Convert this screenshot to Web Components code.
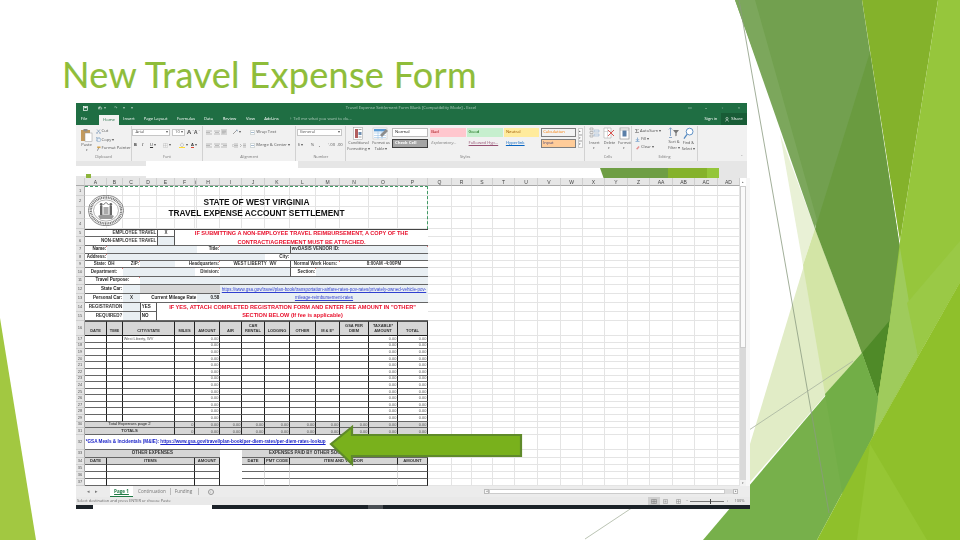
<!DOCTYPE html>
<html lang="en"><head><meta charset="utf-8"><title>New Travel Expense Form</title>
<style>html,body{margin:0;padding:0;background:#fff}</style></head>
<body>
<x-slide>
  <x-title>New Travel Expense Form</x-title>
  <xl-window>
    <xl-titlebar></xl-titlebar>
    <xl-ribbon></xl-ribbon>
    <xl-formula></xl-formula>
    <xl-sheet></xl-sheet>
    <xl-tabs></xl-tabs>
    <xl-status></xl-status>
  </xl-window>
  <x-arrow></x-arrow>
</x-slide>
<script>
function el(name, css, html){
  customElements.define(name, class extends HTMLElement{
    constructor(){super();const s=this.attachShadow({mode:'open'});
      s.innerHTML='<style>'+css+'</style>'+(typeof html==='function'?html():html);}
  });
}
/* place items along a line by their start and end: [html,x0,x1,extraClass] */
function strip(start,items){
  let p=start;
  return items.map(i=>{const m=i[1]-p;p=i[2];
    return `<span class="i ${i[3]||''}" style="margin-left:${m}px;width:${i[2]-i[1]}px">${i[0]}</span>`}).join('');
}
const ico=(w,h,b)=>`<svg width="${w}" height="${h}" viewBox="0 0 ${w} ${h}" style="display:block;flex:none">${b}</svg>`;

el('x-slide',`:host{display:block;position:relative;width:960px;height:540px;overflow:hidden;background:#fff}
.bg{position:absolute;left:0;top:0}
.fl{position:relative;display:flex;flex-direction:column;height:100%;box-sizing:border-box}`,
`<svg class="bg" width="960" height="540" viewBox="0 0 960 540">
<polygon points="0,318 36,540 0,540" fill="#a2c841"/>
<polygon points="780,134 815,229 803,265" fill="#e9f1d6"/>
<polygon points="815,229 862,353 750,482 750,444" fill="#e1ecc6"/>
<polygon points="815,229 862,353 825,394 803,265" fill="#d3e5a6"/>
<polygon points="735,0 862,0 900,248 890,320 878,398 862,353" fill="#72a04f"/>
<polygon points="735,0 755,0 817,220 815,229" fill="#7ca75c"/>
<polygon points="870,52 900,248 890,320 862,353 815,229" fill="#6a9b40"/>
<polygon points="862,353 890,320 878,398" fill="#4f8a28"/>
<polygon points="862,0 938,0 900,241" fill="#84b22b"/>
<polygon points="938,0 960,0 960,282 873,436 878,398 890,320 900,241" fill="#96c63c"/>
<polygon points="900,248 918,356 873,436 878,398 890,320" fill="#9fcb5c"/>
<polygon points="907,303 960,241 960,282 918,356" fill="#9ac946"/>
<polygon points="703,540 862,353 878,398 873,436 817,540" fill="#77b04b"/>
<polygon points="825,394 862,353 878,398 873,436 843,497" fill="#72ae47"/>
<polygon points="817,540 873,436 960,282 960,540" fill="#8fc02b"/>
<polygon points="870,444 927,540 857,540" fill="#96c634"/>
<line x1="739" y1="0" x2="829" y2="513" stroke="#8a9a80" stroke-width=".8"/>
<line x1="585" y1="539" x2="853" y2="361" stroke="#a8b4a0" stroke-width=".8"/>
</svg><div class="fl"><slot></slot></div>`);

el('x-title',`:host{display:block;box-sizing:border-box;height:103px;padding:52px 0 0 62px;
font:36px/44px Lato,"Open Sans",sans-serif;letter-spacing:.32px;-webkit-text-stroke:.15px #8fbd3a;color:#8fbd3a;white-space:nowrap}`,`<slot></slot>`);

el('xl-window',`:host{display:flex;flex-direction:column;width:674px;margin-left:76px;height:406px;background:#fff;filter:blur(.28px)}`,`<slot></slot>`);

el('xl-titlebar',`:host{display:block;width:671px;background:#1f6e43;color:#fff;font:4.2px/1 "Open Sans",sans-serif}
.a{display:flex;align-items:center;height:10px;position:relative}
.b{display:flex;align-items:center;height:12px}
.i{display:flex;align-items:center;justify-content:center;white-space:nowrap;flex:none;height:100%}
.dim{opacity:.6}.home{background:#f1f1f1;color:#1f6e43;height:10px;margin-top:2px}
.sh{background:#185c36;justify-content:center;gap:2px}.s{justify-content:flex-start}`,
()=>`<div class="a">${strip(76,[
 [ico(5,5,'<rect x=".5" y=".5" width="4" height="4" fill="none" stroke="#fff" stroke-width=".7"/><rect x="1.3" y="1" width="2.4" height="1.2" fill="#fff"/>'),82,88],
 [ico(5,4,'<path d="M1 3.5A1.5 1.5 0 1 1 3 3.6M1 .8V2.2H2.4" fill="none" stroke="#fff" stroke-width=".6"/>'),97,103],
 ['▾',103,106,'dim'],['↷',113,118,'dim'],['▾',122,126,'dim'],['▾',130,134,'dim'],
 ['Travel Expense Settlement Form Blank [Compatibility Mode] - Excel',347,475,'dim'],
 ['▭',687,693,'dim'],['–',703,709,'dim'],['▫',720,725,'dim'],['×',736,742,'dim']])}</div>
<div class="b">${strip(76,[['File',79,89],['Home',99,119,'home'],['Insert',124,134],['Page Layout',144,167],['Formulas',177,195],['Data',204,213],['Review',223,236],['View',246,255],['Add-ins',264,279],
 ['<span>♀ Tell me what you want to do...</span>',289,352,'dim s'],['Sign in',704,718],
 [ico(4,5,'<circle cx="2" cy="1.5" r="1.1" fill="none" stroke="#fff" stroke-width=".5"/><path d="M.4 4.6C.6 2.6 3.4 2.6 3.6 4.6" fill="none" stroke="#fff" stroke-width=".5"/>')+'Share',721,747,'sh']])}</div>`);

customElements.define('xl-group',class extends HTMLElement{
  constructor(){super();this.attachShadow({mode:'open'}).innerHTML=`<style>:host{display:flex;flex-direction:column;flex:none;box-sizing:border-box;height:35px;border-right:.7px solid #d2d2d2}
.m{flex:1;min-height:0;display:flex}
.l{height:7px;text-align:center;font:3.8px/6px "Open Sans",sans-serif;color:#777}</style><div class="m"><slot></slot></div><div class="l"><slot name="label"></slot></div>`;}
});

const G={
 paste:ico(13,14,'<rect x="1" y="2" width="9" height="11" fill="#c39a5d"/><rect x="3.5" y="1" width="4" height="2.4" fill="#8d8d8d"/><rect x="5" y="5" width="7" height="8.5" fill="#fff" stroke="#999" stroke-width=".5"/>'),
 cut:ico(5,5,'<path d="M1 .5 3.6 3.5M4 .5 1.4 3.5" stroke="#6d8db0" stroke-width=".6"/><circle cx="1" cy="4" r=".7" fill="none" stroke="#6d8db0" stroke-width=".4"/><circle cx="4" cy="4" r=".7" fill="none" stroke="#6d8db0" stroke-width=".4"/>'),
 copy:ico(5,5,'<rect x=".5" y=".5" width="3" height="3.4" fill="#fff" stroke="#8aa7c4" stroke-width=".5"/><rect x="1.6" y="1.3" width="3" height="3.4" fill="#e8eef5" stroke="#8aa7c4" stroke-width=".5"/>'),
 brush:ico(5,5,'<rect x="1.2" y=".5" width="3.3" height="1.6" fill="#d3a24c"/><path d="M2.6 2.1 1.4 4.7" stroke="#777" stroke-width=".8"/>'),
 lines:(a)=>ico(6,5,`<path d="${a}" stroke="#8b8b8b" stroke-width=".55" fill="none"/>`),
 table:ico(17,13,'<rect x="1" y="1" width="14" height="11" fill="#fff" stroke="#bbb" stroke-width=".5"/><rect x="2" y="2" width="12" height="2.4" fill="#5c9bd5"/><path d="M2 6h12M2 8.500h12M2 10.500h12M6 4v8M10 4v8" stroke="#9cc3e6" stroke-width=".6"/><path d="M8 8l6-6 2 2-6 6z" fill="#8c8c8c"/>'),
 cond:ico(13,13,'<rect x="1.500" y=".5" width="9" height="12" fill="#fff" stroke="#999" stroke-width=".5"/><rect x="3" y="2" width="3" height="9" fill="#b25d5d"/><rect x="6.500" y="5" width="3" height="3" fill="#6d8db0"/><path d="M6.500 2.500h3M6.500 10h3" stroke="#888" stroke-width=".8"/>'),
 ins:ico(11,13,'<path d="M1 1h3v2H1zM1 4.5h3v2H1zM1 8h3v2H1z" fill="none" stroke="#888" stroke-width=".5"/><path d="M5 3h5v2H5zM5 7h5v2H5z" fill="#e9eef4" stroke="#8aa7c4" stroke-width=".5"/>'),
 del:ico(12,13,'<path d="M1 1h7v10H1z" fill="#fff" stroke="#999" stroke-width=".5"/><path d="M1 4.5h7M4.5 1v10" stroke="#bbb" stroke-width=".5"/><path d="M5 3l6 6M11 3 5 9" stroke="#d9534f" stroke-width="1"/>'),
 fmt:ico(11,13,'<rect x="1" y="1" width="9" height="11" fill="#fff" stroke="#888" stroke-width=".6"/><rect x="3.5" y="3.5" width="4" height="6" fill="#5a7fa8"/><path d="M1 3h9" stroke="#888" stroke-width=".5"/>'),
 sigma:'<b style="font:7px/1 \'Liberation Serif\',serif;color:#555">Σ</b>',
 sort:ico(11,12,'<path d="M2.5 1v8" stroke="#5f87b7" stroke-width=".7"/><path d="M5 3h6L8.6 6V8.7L7.4 9.3V6z" fill="#777"/><path d="M.8 2.5l1.7-1.8 1.7 1.8" fill="none" stroke="#5f87b7" stroke-width=".6"/><path d="M1 10.5h3" stroke="#5f87b7" stroke-width=".7"/>'),
 mag:ico(11,13,'<circle cx="6.6" cy="4.6" r="3.4" fill="#fff" stroke="#4f86bf" stroke-width=".9"/><path d="M4 7.3 1 11.6" stroke="#4f86bf" stroke-width="1.2"/>'),
};
function grp(label,w,body){return `<xl-group style="width:${w}px">${body}<span slot="label">${label}</span></xl-group>`}

el('xl-ribbon',`:host{display:flex;width:671px;height:36px;background:#f1f1f1;font:4.2px/1 "Open Sans",sans-serif;color:#555;box-sizing:border-box;padding-top:1px;overflow:hidden}
.col{display:flex;flex-direction:column}
.line{display:flex;align-items:center;height:8px;flex:none;white-space:nowrap}
.i{display:flex;align-items:center;white-space:nowrap;flex:none;height:100%;gap:1px}
.box{background:#fff;border:.6px solid #c6c6c6;box-sizing:border-box;padding-left:2px;height:7px;justify-content:space-between;padding-right:1px}
.stack{display:flex;flex-direction:column;align-items:center;text-align:center;line-height:5.6px;flex:none;white-space:nowrap}
.tight{font-size:3.8px}
.ga{display:grid;grid-template-columns:36px 36px 36px 35px 35px;grid-auto-rows:9px;column-gap:1.3px;row-gap:1.500px;margin:2px 0 0 1px;flex:none}
.s{display:flex;align-items:center;padding-left:1.5px;font-size:4.2px;box-sizing:border-box;white-space:nowrap;overflow:hidden}
.u{text-decoration:underline}
.sc{display:flex;flex-direction:column;margin:2px 0 0 2px}
.sc i{display:block;width:5px;height:6.5px;background:#fafafa;border:.5px solid #ccc;box-sizing:border-box;font:3px/5px "Liberation Sans";text-align:center;font-style:normal}
.cl{flex:none;align-self:flex-end;margin:0 0 2px 43px;font-size:4px}`,
()=>`${grp('Clipboard',55.7,`<div class="stack" style="width:17px;margin:2px 0 0 2px">${G.paste}<span>Paste</span><span style="font-size:3px">▾</span></div>
 <div class="col" style="margin:1px 0 0 .5px;gap:.8px">
 <div class="line">${G.cut}&nbsp;Cut</div><div class="line">${G.copy}&nbsp;Copy ▾</div><div class="line">${G.brush}&nbsp;Format Painter</div></div>`)}
${grp('Font',71.5,`<div class="col" style="padding-top:2px;gap:5px">
 <div class="line">${strip(131.7,[['Arial <span>▾</span>',132.5,170,'box'],['10 <span>▾</span>',172,185,'box'],['<b style="font-size:6px">A</b>ˆ',187,193],['<b style="font-size:5px">A</b>ˇ',194,200]])}</div>
 <div class="line">${strip(131.7,[['<b style="color:#333">B</b>',134,138],['<i style="font-family:Liberation Serif;color:#333">I</i>',142,146],['<u style="color:#333">U</u> ▾',150,158],[ico(5,5,'<path d="M.5.5h4v4h-4zM2.5.5v4M.5 2.5h4" fill="none" stroke="#999" stroke-width=".4" stroke-dasharray=".6 .4"/>')+' ▾',163,172],[ico(6,6,'<path d="M1 3 3 .8 5 3 3 5z" fill="#eee" stroke="#999" stroke-width=".4"/><rect y="5" width="6" height="1" fill="#ffd92f"/>')+' ▾',179,188],['<span style="display:block;text-align:center;border-bottom:1.1px solid #d43;color:#333;line-height:5px;font-weight:700">A</span> ▾',191,199]])}</div></div>`)}
${grp('Alignment',93,`<div class="col" style="padding-top:2px;gap:5px">
 <div class="line">${strip(202.9,[[G.lines('M0 1h6M0 2.5h4M0 4h6'),206,212],[G.lines('M0 1h6M1 2.5h4M0 4h6'),214,220],['<span style="background:#d4d4d4;display:flex;padding:1px">'+G.lines('M0 1h6M0 2.5h6M0 4h4').replace('width="6" height="5"','width="4" height="4"')+'</span>',221,228],[ico(6,6,'<path d="M1 5 5 1" stroke="#8a8a8a" stroke-width=".8"/><path d="M4 1h1.6v1.6" stroke="#7a9cc0" fill="none" stroke-width=".5"/>')+'▾',232,240],[ico(5,5,'<path d="M.5.5h4v4h-4z" fill="#fff" stroke="#9aa" stroke-width=".4"/><path d="M1 2.5h3" stroke="#6d8db0" stroke-width=".6"/>')+' Wrap Text',250,276]])}</div>
 <div class="line">${strip(202.9,[[G.lines('M0 1h6M0 2.5h4M0 4h6'),206,212],[G.lines('M0 1h6M1 2.5h4M0 4h6'),214,220],[G.lines('M0 1h6M2 2.5h4M0 4h6'),221,227],[G.lines('M2 1h4M2 2.5h4M2 4h4M1.5 1 0 2.5 1.5 4'),232,238],[G.lines('M3 1h3M3 2.5h3M3 4h3M0 1l1.5 1.5L0 4'),240,246],[ico(5,5,'<path d="M.5.5h4v4h-4z" fill="#fff" stroke="#9aa" stroke-width=".4"/><path d="M1 2.5h3" stroke="#6d8db0" stroke-width=".6"/>')+' Merge &amp; Center ▾',250,293]])}</div></div>`)}
${grp('Number',50.3,`<div class="col" style="padding-top:2px;gap:5px">
 <div class="line">${strip(296.4,[['General <span>▾</span>',297,342,'box']])}</div>
 <div class="line">${strip(296.4,[['$ ▾',298,306],['%',311,316],['<b>,</b>',319,322],['⁺.00',328,336],['.00',337,343]])}</div></div>`)}
${grp('Styles',238.5,`<div class="stack tight" style="width:24px;padding-top:1px">${G.cond}<span>Conditional</span><span>Formatting ▾</span></div>
 <div class="stack tight" style="width:21px;padding-top:1px">${G.table}<span>Format as</span><span>Table ▾</span></div>
 <div class="ga">
 <div class="s" style="background:#fff;border:.7px solid #bbb;color:#111">Normal</div>
 <div class="s" style="background:#ffc7ce;color:#9c0006">Bad</div>
 <div class="s" style="background:#c6efce;color:#006100">Good</div>
 <div class="s" style="background:#ffeb9c;color:#9c5700">Neutral</div>
 <div class="s" style="background:#f2f2f2;color:#fa7d00;border:.6px solid #7f7f7f">Calculation</div>
 <div class="s" style="background:#a5a5a5;color:#fff;font-weight:700;border:.7px double #3f3f3f">Check Cell</div>
 <div class="s" style="color:#7f7f7f;font-style:italic">Explanatory...</div>
 <div class="s u" style="color:#954f72">Followed Hyp...</div>
 <div class="s u" style="color:#0563c1">Hyperlink</div>
 <div class="s" style="background:#ffcc99;color:#3f3f76;border:.6px solid #7f7f7f">Input</div>
 </div><div class="sc"><i>▴</i><i>▾</i><i>▾</i></div>`)}
${grp('Cells',47,`<div class="stack tight" style="width:15px;padding-top:1px;margin-left:2px">${G.ins}<span>Insert</span><span style="font-size:3px">▾</span></div>
 <div class="stack tight" style="width:15px;padding-top:1px">${G.del}<span>Delete</span><span style="font-size:3px">▾</span></div>
 <div class="stack tight" style="width:15px;padding-top:1px">${G.fmt}<span>Format</span><span style="font-size:3px">▾</span></div>`)}
${grp('Editing',66,`<div class="col" style="margin:1px 0 0 3px;width:32px">
 <div class="line" style="gap:1px">${G.sigma} AutoSum ▾</div><div class="line" style="gap:1px">${ico(5,5,'<path d="M2.5.5v3M1 2.2l1.5 1.6L4 2.2M.5 4.6h4" fill="none" stroke="#4f86bf" stroke-width=".6"/>')} Fill ▾</div><div class="line" style="gap:1px">${ico(5,5,'<path d="M1 4 3.5 1 4.6 2 2.5 4.5z" fill="#e58e8e"/>')} Clear ▾</div></div>
 <div class="stack tight" style="width:14px;padding-top:1px">${G.sort}<span>Sort &amp;</span><span>Filter ▾</span></div>
 <div class="stack tight" style="width:15px;padding-top:1px">${G.mag}<span>Find &amp;</span><span>Select ▾</span></div>`)}<span class="cl">ˆ</span>`);

el('xl-formula',`:host{display:grid;grid-template-columns:70px 152px 1fr;width:671px;height:17px;background:#e6e6e6}
.a{display:flex;flex-direction:column}.g1{height:5px}.w{height:10px;background:#fff}.g2{height:2px;padding-left:10px}.g2 i{display:block;width:5px;height:4px;margin-top:-2px;background:#8db53d}
.m{background:#fff}
.r{display:flex;flex-direction:column}.r1{height:7px}.r2{height:10px;background:#fff;display:flex}
.sh{flex:none;margin-left:302px;width:119px;height:10px;clip-path:polygon(0 0,100% 0,100% 100%,3% 100%);background:linear-gradient(90deg,#6e9e44 0 57%,#85b22b 57% 90%,#94c63a 90%)}
.e{flex:1;background:#e6e6e6}`,
`<div class="a"><div class="g1"></div><div class="w"></div><div class="g2"><i></i></div></div><div class="m"></div>
<div class="r"><div class="r1"></div><div class="r2"><div class="sh"></div><div class="e"></div></div></div>`);

const COLS=[['',9],['A',22],['B',16],['C',17],['D',17],['E',18],['F',20],['G',2],['H',23],['I',22],['J',23],['K',25],['L',26],['M',24],['N',29],['O',29],['P',30],['Q',24],['R',20],['S',21],['T',22],['U',23],['V',23],['W',22],['X',22],['Y',23],['Z',22],['AA',23],['AB',22],['AC',23],['AD',22]];
const ROWS=[10,11,12,10,8.3,8.4,8.3,7,7,8.7,8.3,9,8.7,9,9,15.3].concat(Array(14).fill(6.6),[7.2,14.4,8,7.5,6.83,6.83,6.84]);
const CI={};COLS.forEach((c,i)=>CI[c[0]]=i+1);
function cell(ref,txt,cls){
  const m=ref.match(/^([A-Z]+)(\d+)(?::([A-Z]+)(\d+))?$/);
  const c0=CI[m[1]],r0=+m[2],c1=CI[m[3]||m[1]],r1=+(m[4]||m[2]);
  return `<div class="c ${cls||''}" style="grid-area:${r0+1}/${c0}/${r1+2}/${c1+1}">${txt||''}</div>`;
}
function sheet(){
  let h='';
  COLS.forEach((c,i)=>{h+=`<div class="hc" style="grid-area:1/${i+1}">${c[0]==='G'?'(':c[0]}</div>`});
  ROWS.forEach((_,r)=>{h+=`<div class="hr" style="grid-area:${r+2}/1">${r+1}</div>`;
    for(let i=1;i<COLS.length;i++)h+=`<div class="g" style="grid-area:${r+2}/${i+1}"></div>`;});
  const W='w ln ',P='p ln ';
  h+=cell('A1:C4',`<svg width="36" height="31" viewBox="0 0 36 31"><ellipse cx="18" cy="15.5" rx="17.6" ry="15.2" fill="#fff" stroke="#555" stroke-width=".7"/><ellipse cx="18" cy="15.5" rx="15.2" ry="13" fill="none" stroke="#777" stroke-width="2.4" stroke-dasharray="1 .7"/><ellipse cx="18" cy="15.5" rx="12.5" ry="10.6" fill="#fff" stroke="#666" stroke-width=".5"/><path d="M10 21c3-2 13-2 16 0l-2 3H12z" fill="#999"/><path d="M12 11h2.4v9H12zM21.6 11H24v9h-2.4z" fill="#666"/><circle cx="13.2" cy="9.5" r="1.4" fill="#666"/><circle cx="22.8" cy="9.5" r="1.4" fill="#666"/><path d="M15.5 12h5v7h-5z" fill="#aaa"/><path d="M15.5 10c1.5-3 3.500-3 5 0" fill="none" stroke="#777"/></svg>`,'seal');
  h+=cell('A2:P2','STATE OF WEST VIRGINIA','ti m');
  h+=cell('A3:P3','TRAVEL EXPENSE ACCOUNT SETTLEMENT','ti m');
  h+=cell('A5:D5','EMPLOYEE TRAVEL','r t sb '+W)+cell('E5','X','m t bx sb '+W)+cell('A6:D6','NON-EMPLOYEE TRAVEL','r sb '+W)+cell('E6','','bx '+P);
  h+=cell('F5:P6','<span>IF SUBMITTING A NON-EMPLOYEE TRAVEL REIMBURSEMENT, A COPY OF THE</span><span>CONTRACT/AGREEMENT MUST BE ATTACHED.</span>','col red t '+W);
  h+=cell('A7','Name:','r b n '+W)+cell('B7:G7','',P)+cell('H7','Title:','r b n '+W)+cell('I7:K7','',P)+cell('L7:P7','wvOASIS VENDOR ID:','sb n lb '+P);
  h+=cell('A8','Address:','r b n '+W)+cell('B8:J8','',P)+cell('K8','City:','r sb '+W)+cell('L8:P8','',P);
  h+=cell('A9','State:','r sb '+W)+cell('B9','OH','sb '+W)+cell('C9','ZIP:','r sb n '+W)+cell('D9:E9','',P)+cell('F9:H9','Headquarters:','r sb n '+W)+cell('I9:K9','WEST LIBERTY&nbsp; WV','m sb '+W)+cell('L9:M9','Normal Work Hours:','m sb n lb '+W)+cell('N9:P9','8:00AM -4:00PM','m sb '+W);
  h+=cell('A10:B10','Department:','m sb n '+W)+cell('C10:F10','',P)+cell('G10:H10','Division:','r sb n '+W)+cell('I10:K10','',P)+cell('L10','Section:','r sb n lb '+W)+cell('M10:P10','',P);
  h+=cell('A11:C11','Travel Purpose:','m b n '+W)+cell('D11:P11','',P);
  h+=cell('A12:B12','State Car:','r b '+W)+cell('C12','',P)+cell('D12:H12','','gr ln');
  h+=cell('I12:P13','<span class="lk">https://www.gsa.gov/travel/plan-book/transportation-airfare-rates-pov-rates/privately-owned-vehicle-pov-</span><span class="lk">mileage-reimbursement-rates</span>','col lw '+P);
  h+=cell('A13:B13','Personal Car:','r b '+W)+cell('C13','X','m sb '+P)+cell('D13:G13','Current Mileage Rate','r b '+W)+cell('H13','0.58','r b '+P);
  h+=cell('A14:B14','REGISTRATION','r sb '+W)+cell('C14','',P)+cell('D14','YES','b bx '+W);
  h+=cell('A15:B15','REQUIRED?','r sb '+W)+cell('C15','',P)+cell('D15','NO','b bx '+W);
  h+=cell('E14:P15','<span>IF YES, ATTACH COMPLETED REGISTRATION FORM AND ENTER FEE AMOUNT IN "OTHER"</span><span>SECTION BELOW (If fee is applicable)</span>','col red '+W);
  const tc=[['A','A'],['B','B'],['C','E'],['F','F'],['G','H'],['I','I'],['J','J'],['K','K'],['L','L'],['M','M'],['N','N'],['O','O'],['P','P']];
  const hd=['DATE','TIME','CITY/STATE','MILES','AMOUNT','AIR','CAR<br>RENTAL','LODGING','OTHER','M &amp; E*','GSA PER<br>DIEM','TAXABLE*<br>AMOUNT','TOTAL'];
  tc.forEach((t,i)=>{h+=cell(`${t[0]}16:${t[1]}16`,`<span>${hd[i]}</span>`,'hd');
    for(let r=17;r<=29;r++){let x='',k='r vv d';
      if(t[0]==='G'||t[0]==='O'||t[0]==='P')x='0.00';
      if(t[0]==='C'&&r===17){x='West Liberty, WV';k='vv d'}
      h+=cell(`${t[0]}${r}:${t[1]}${r}`,x,k+' w ln ')}
    [30,31].forEach(r=>{
      if(t[0]==='A'){h+=cell(`A${r}:E${r}`,r===30?'Total Expenses page 2':'TOTALS','m gr ln vv e '+(r===31?'sb':''));return}
      if(t[0]==='B'||t[0]==='C')return;
      h+=cell(`${t[0]}${r}:${t[1]}${r}`,t[0]==='F'?'0':'0.00','r gr ln vv d');
    });
  });
  h+=cell('A32:P32','*GSA Meals &amp; Incidentals (M&amp;IE): <u>https://www.gsa.gov/travel/plan-book/per-diem-rates/per-diem-rates-lookup</u>','bl w ln');
  h+=cell('A33:H33','OTHER EXPENSES','m gr ln sb')+cell('I33:I37','','w ln')+cell('J33:P33','<span>EXPENSES PAID BY OTHER SOURCES</span><span class="note">(not included in totals)</span>','m gr ln sb');
  [['A','A','DATE'],['B','F','ITEMS'],['G','H','AMOUNT'],['J','J','DATE'],['K','K','PMT CODE'],['L','O','ITEM AND VENDOR'],['P','P','AMOUNT']].forEach(t=>{
    h+=cell(`${t[0]}34:${t[1]}34`,t[2],'m gr ln vv sb e');
    for(let r=35;r<=37;r++)h+=cell(`${t[0]}${r}:${t[1]}${r}`,'','w ln '+(t[0]==='L'||t[0]==='J'||t[0]==='K'?'vl':'vv'));
  });
  h+=`<div class="ants" style="grid-area:2/2/39/18"></div>`;
  return `<div class="grid">${h}</div>
  <div class="sb1"><i class="up">▴</i><div class="th"></div><div class="tr"><i>▾</i></div></div><div class="st"></div>`;
}
el('xl-sheet',`:host{display:flex;height:308px;width:674px;flex:none}
.grid{display:grid;width:664px;flex:none;grid-template-columns:${COLS.map(c=>c[1]+'px').join(' ')};grid-template-rows:8px ${ROWS.map(r=>r+'px').join(' ')};font:4.5px/1 "Liberation Sans",sans-serif;color:#222;background:#fff}
.hc{background:#e6e6e6;border-right:.6px solid #cfcfcf;border-bottom:.7px solid #aaa;box-sizing:border-box;font:5px/8px "Liberation Sans",sans-serif;text-align:center;color:#444;overflow:hidden}
.hr{background:#e6e6e6;border-right:.7px solid #aaa;border-bottom:.6px solid #cfcfcf;box-sizing:border-box;display:flex;align-items:center;justify-content:center;font-size:4px;color:#555;overflow:hidden;min-height:0}
.g{border-right:.6px solid #e4e4e4;border-bottom:.6px solid #e4e4e4;box-sizing:border-box;min-height:0}
.c{display:flex;align-items:center;min-width:0;min-height:0;overflow:hidden;box-sizing:border-box;white-space:nowrap;padding:.6px .7px 0;position:relative}
.r{justify-content:flex-end}.m{justify-content:center}.b{font-weight:700}.sb{font-weight:700;color:#333}
.d{font-size:3.9px;color:#555;padding-top:.2px}.e{font-size:4.2px;padding-top:.2px}
.w{background:#fff}.p{background:#e9eff3}.gr{background:#d6d6d6}
.ln{border-bottom:.8px solid #666}.t{border-top:.8px solid #444}.bx{border-right:.8px solid #555;border-left:.8px solid #555}.lb{border-left:.8px solid #555}
.vv{border-right:1px solid #222}.vl{border-right:.6px solid #d8d8d8}
.ti{font:700 8.35px/1 "Liberation Sans",sans-serif;color:#111;overflow:visible}
.seal{overflow:visible;align-items:flex-end;padding:0 0 3px 3px}
.col{flex-direction:column;justify-content:center;align-items:center}
.red{color:#e8112d;font-weight:700;font-size:5.6px;line-height:8.3px}
.lw{font-size:4.46px;line-height:7.5px;color:#2f3fd0}.lk{text-decoration:underline}
.bl{color:#1a22c8;font-weight:700;font-size:4.63px;white-space:pre}
.hd{background:#d6d6d6;border-right:1px solid #222;border-bottom:1.1px solid #222;border-top:.7px solid #555;align-items:flex-end;justify-content:center;text-align:center;font-weight:700;font-size:4px;line-height:4.8px;color:#333;padding-bottom:1px}
.n::after{content:"";position:absolute;right:0;top:0;border-top:1.4px solid #c00;border-left:1.4px solid transparent}
.note{color:#c4622d;font-weight:400;margin-left:4px}
.ants{border-top:1px dashed #3f9a63;border-right:1px dashed #3f9a63;box-sizing:border-box;pointer-events:none;min-height:0}
.sb1{width:6px;flex:none;display:flex;flex-direction:column;background:#e6e6e6}
.up{display:block;height:8px;background:#fff;font:3px/8px "Liberation Sans";text-align:center;color:#666;font-style:normal}
.th{height:162px;background:#fafafa;border:.5px solid #ccc;box-sizing:border-box}
.tr{flex:1;background:#d9d9d9;display:flex;align-items:flex-end}.tr i{display:block;width:100%;height:6px;background:#f2f2f2;font:3px/6px "Liberation Sans";text-align:center;color:#666;font-style:normal}
.st{flex:1;background:#f7f7f7}`,sheet);

el('xl-tabs',`:host{display:flex;align-items:center;height:11px;width:674px;background:#ececec;font:4.6px/1 "Open Sans",sans-serif;color:#777;flex:none}
.i{display:flex;align-items:center;justify-content:center;white-space:nowrap;flex:none;height:100%;box-sizing:border-box}
.on{background:#fff;color:#1f7a45;font-weight:700;text-decoration:underline;border-bottom:1px solid #1f7a45}
.pl{font-size:5px}.cir{border:.6px solid #999;border-radius:50%;height:6px;width:6px!important;font-size:4px}
.bar{background:#fff;height:5px;border:.5px solid #ccc;justify-content:flex-start}.btn{background:#f7f7f7;height:5px;border:.5px solid #bbb;font-size:3px}.thumb{background:#dcdcdc;height:5px}
.sep{border-left:.6px solid #bbb;height:7px}`,
()=>strip(76,[['◂',86,90,'pl'],['▸',94,98,'pl'],['Page 1',110,133,'on'],['Continuation',138,166],['',170,171,'sep'],['Funding',175,192],['',198,199,'sep'],['+',208,214,'cir'],['◂',484,489,'btn'],['',489,725,'bar'],['',725,733,'thumb'],['▸',733,738,'btn']]));

el('xl-status',`:host{display:flex;flex-direction:column;height:12px;width:674px;flex:none;background:#e9e9e9}
.a{display:flex;align-items:center;height:8px;font:3.9px/1 "Open Sans",sans-serif;color:#666}
.i{display:flex;align-items:center;justify-content:center;white-space:nowrap;flex:none;height:100%}
.s{justify-content:flex-start}.hi{background:#cfcfcf}
.z{height:.6px;background:#777;position:relative;display:block}
.z i{position:absolute;left:20px;top:-2px;width:1px;height:5px;background:#444}
.k{display:flex;height:4px;background:#1b2228}.k i{display:block;height:100%}`,
()=>`<div class="a">${strip(76,[['Select destination and press ENTER or choose Paste',77,161,'s'],
 [ico(6,5,'<path d="M.5.5h5v4h-5zM2.200.5v4M3.800.5v4M.5 2.500h5" fill="none" stroke="#777" stroke-width=".5"/>'),648,660,'hi'],
 [ico(5,5,'<path d="M.5.5h4v4h-4z" fill="none" stroke="#888" stroke-width=".5"/><path d="M1.500 1.500h2v2h-2z" fill="#aaa"/>'),662,669],
 [ico(5,5,'<path d="M.5.5h4v4h-4zM2.500.5v4M.5 2.500h4" fill="none" stroke="#888" stroke-width=".5"/>'),675,682],
 ['−',685,689],['<span class="z" style="width:100%"><i></i></span>',690,724],['+',725,730],['100%',733,746]])}</div>
 <div class="k"><i style="width:17px"></i><i style="width:119px;background:#fff"></i><i style="width:156px"></i><i style="width:15px;background:#4a4f54"></i></div>`);

el('x-arrow',`:host{position:absolute;left:326px;top:422px;width:200px;height:48px;display:block}svg{display:block}`,
`<svg width="200" height="48" viewBox="326 422 200 48"><polygon points="331,444 352,427 352,435 521,435 521,456 352,456 352,464" fill="#79b11c" stroke="#5f8a2a" stroke-width="2.2"/></svg>`);
</script>
</body></html>
